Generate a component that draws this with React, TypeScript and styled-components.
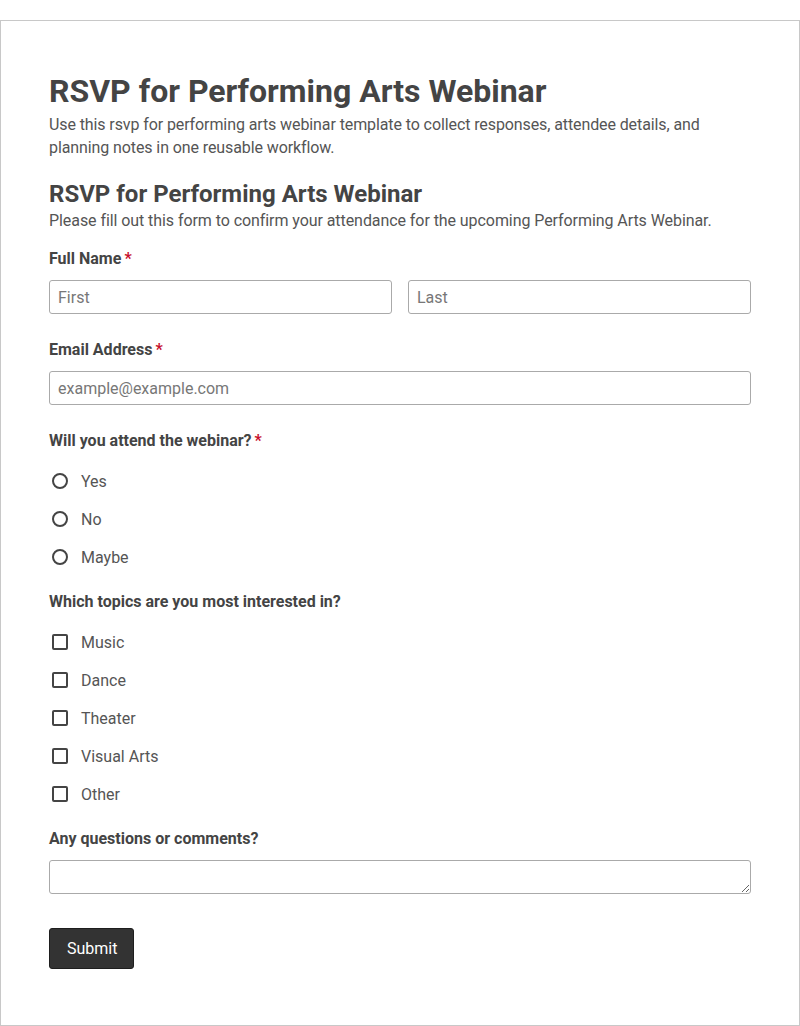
import React from "react";
import styled, { createGlobalStyle } from "styled-components";

const GlobalStyle = createGlobalStyle`
  html, body { margin: 0; padding: 0; background: #fff; }
  body { font-family: Roboto, "Liberation Sans", Arial, sans-serif; color: #444; }
  * { box-sizing: border-box; }
`;

const Page = styled.div`
  padding-top: 20px;
`;

const Card = styled.div`
  border: 1px solid #c8c8c8;
  padding: 51px 48px 56px;
  background: #fff;
`;

const Title = styled.h1`
  margin: 0 0 3px;
  font-size: 32px;
  line-height: 38px;
  font-weight: 700;
  color: #444;
`;

const Intro = styled.p`
  margin: 0 0 21px;
  font-size: 16px;
  line-height: 23px;
  letter-spacing: -0.1px;
  color: #555;
`;

const FormTitle = styled.h2`
  margin: 0;
  font-size: 24px;
  line-height: 29px;
  font-weight: 700;
  color: #444;
`;

const FormDesc = styled.p`
  margin: 0 0 17px;
  font-size: 16px;
  line-height: 23px;
  letter-spacing: -0.07px;
  color: #555;
`;

const Field = styled.div`
  margin-bottom: 26px;
`;

const Label = styled.div`
  font-size: 16px;
  line-height: 20px;
  font-weight: 700;
  color: #444;
  margin-bottom: 11px;
`;

const Req = styled.span`
  color: #c8102e;
  margin-left: 3px;
`;

const Row = styled.div`
  display: flex;
  gap: 16px;
`;

const Input = styled.input`
  display: block;
  width: 100%;
  height: 34px;
  border: 1px solid #aaa;
  border-radius: 3px;
  padding: 0 8px;
  font-family: inherit;
  font-size: 16px;
  color: #444;
  background: #fff;
  &::placeholder { color: #777; }
`;

const TextArea = styled.textarea`
  display: block;
  width: 100%;
  height: 34px;
  border: 1px solid #aaa;
  border-radius: 3px;
  padding: 6px 8px;
  font-family: inherit;
  font-size: 16px;
  resize: vertical;
  background: #fff;
`;

const OptionList = styled.div`
  display: flex;
  flex-direction: column;
  gap: 18px;
  padding-top: 9px;
  margin-bottom: -1px;
`;

const Option = styled.label`
  display: flex;
  align-items: center;
  height: 20px;
  font-size: 16px;
  color: #555;
`;

const Mark = styled.span<{ $round?: boolean }>`
  width: 16px;
  height: 16px;
  margin: 0 13px 0 3px;
  border: 2px solid #444;
  border-radius: ${(p) => (p.$round ? "50%" : "2px")};
  flex-shrink: 0;
`;

const Button = styled.button`
  margin-top: 8px;
  height: 41px;
  padding: 0 16px 0 17px;
  background: #333;
  color: #fff;
  border: 1px solid #1e1e1e;
  border-radius: 3px;
  font-family: inherit;
  font-size: 16px;
`;

export default function App() {
  const attend = ["Yes", "No", "Maybe"];
  const topics = ["Music", "Dance", "Theater", "Visual Arts", "Other"];
  return (
    <Page>
      <GlobalStyle />
      <Card>
        <Title>RSVP for Performing Arts Webinar</Title>
        <Intro>
          Use this rsvp for performing arts webinar template to collect responses, attendee details, and
          planning notes in one reusable workflow.
        </Intro>
        <FormTitle>RSVP for Performing Arts Webinar</FormTitle>
        <FormDesc>Please fill out this form to confirm your attendance for the upcoming Performing Arts Webinar.</FormDesc>

        <Field>
          <Label>
            Full Name<Req>*</Req>
          </Label>
          <Row>
            <Input placeholder="First" />
            <Input placeholder="Last" />
          </Row>
        </Field>

        <Field>
          <Label>
            Email Address<Req>*</Req>
          </Label>
          <Input placeholder="example@example.com" />
        </Field>

        <Field>
          <Label>
            Will you attend the webinar?<Req>*</Req>
          </Label>
          <OptionList>
            {attend.map((a) => (
              <Option key={a}>
                <Mark $round />
                {a}
              </Option>
            ))}
          </OptionList>
        </Field>

        <Field>
          <Label>Which topics are you most interested in?</Label>
          <OptionList>
            {topics.map((t) => (
              <Option key={t}>
                <Mark />
                {t}
              </Option>
            ))}
          </OptionList>
        </Field>

        <Field>
          <Label>Any questions or comments?</Label>
          <TextArea />
        </Field>

        <Button>Submit</Button>
      </Card>
    </Page>
  );
}
